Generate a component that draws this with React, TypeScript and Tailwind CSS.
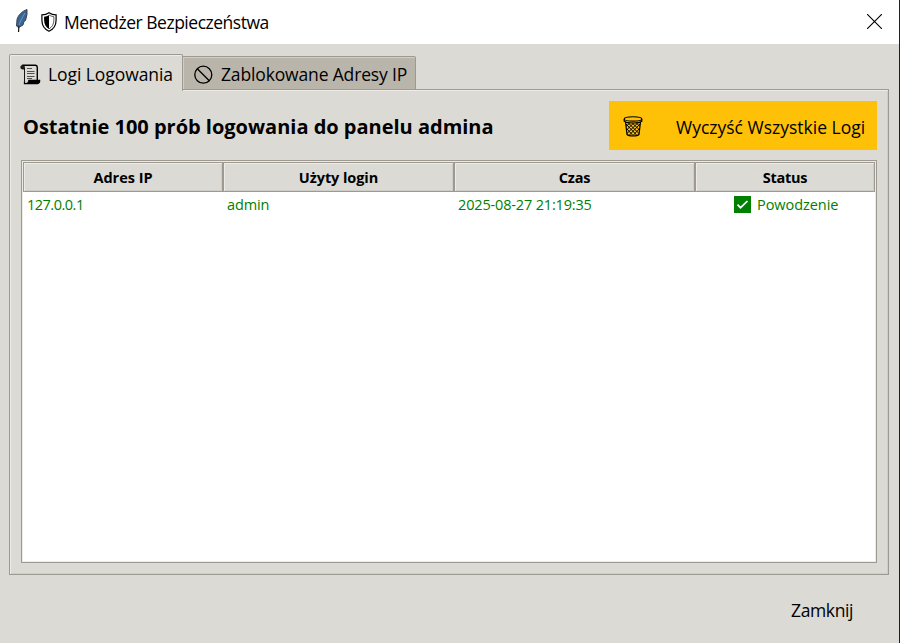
import React from "react";

function Feather() {
  return (
    <svg width="13" height="24" viewBox="0 0 13 24" fill="none">
      <path d="M12 .5C8 2 3.500 5.500 2 10.500L1.500 17l2 1.500 4.500-2.500 1-3.500 1.500-1L12 5.500z" fill="#3a6494" />
      <path d="M12 .5C7.500 2 3 6 2 10.500L1.500 17l2 1.500 4.500-2.500 1-3.500 1.500-1L12 5.500z" stroke="#2b3849" strokeWidth=".9" />
      <path d="M10 4C7 9 4.500 13 3.800 18" stroke="#7ba3c6" strokeWidth=".8" />
      <path d="M4 16.500L3.500 23" stroke="#111" strokeWidth="1.200" />
    </svg>
  );
}

function Shield() {
  return (
    <svg width="16" height="20" viewBox="0 0 16 20" fill="none">
      <path d="M8 .7C6 2.100 3.500 2.800.9 2.800V8c0 5.500 3 9.400 7.100 11.300C12.100 17.400 15.100 13.500 15.100 8V2.800C12.500 2.800 10 2.100 8 .7z" fill="#fff" stroke="#000" strokeWidth="1.200" />
      <path d="M8 3C6.500 4 4.900 4.500 3.100 4.700V8c0 4.200 1.900 7.200 4.900 8.900z" fill="#000" />
      <path d="M8 3c1.500 1 3.100 1.500 4.900 1.700V8c0 4.200-1.900 7.200-4.900 8.900" stroke="#333" strokeWidth=".8" />
    </svg>
  );
}

function Scroll() {
  return (
    <svg width="21" height="21" viewBox="0 0 21 21" fill="none" stroke="#000">
      <path d="M2.500 1.300H15.500Q17.300 1.500 17.300 3.500V17" strokeWidth="1.400" />
      <path d="M4.500 5v12.500" strokeWidth=".9" />
      <path d="M4.500 5H1.800C.3 4.200.5 1.500 2.500 1.200c1.800.2 2.300 2 2 3.800z" fill="#222" strokeWidth=".8" />
      <path d="M4.500 17.200v2.500h12.800c2-.2 2.500-2 2.300-3.200H8.500" strokeWidth="1.300" />
      <path d="M8.500 16.500c-.2 1.500-.9 2.500-2.500 3H17.500c1.500-.5 2-1.800 2-3z" fill="#000" strokeWidth=".6" />
      <path d="M7 4.500h5M7 7.500h7.500M7 9.500h7.500M7 12.500h7.500M7 14.500h5" strokeWidth=".9" stroke="#444" />
    </svg>
  );
}

function Prohibited() {
  return (
    <svg width="20" height="20" viewBox="0 0 20 20" fill="none" stroke="#000" strokeWidth="1.300">
      <circle cx="10.300" cy="9.700" r="8.500" />
      <path d="M4.300 3.700l12 12" />
    </svg>
  );
}

function Basket() {
  return (
    <svg width="20" height="21" viewBox="0 0 20 21" fill="none" stroke="#000">
      <ellipse cx="10" cy="2.900" rx="8.800" ry="2.200" strokeWidth="1.100" />
      <path d="M1.200 3v2.200c3 2.400 14.600 2.400 17.600 0V3M2.500 6l1.500 12.500c2 2 10 2 12 0L17.500 6" strokeWidth="1.200" />
      <path d="M3 8l11 11.500M5.500 7.200L16 17.500M9.500 7.200l7 6.800M13.500 7.200l3.500 3.300M3.500 12.500l6.500 7M17 8L6 19.500M14.500 7.200L4 17.500M10.500 7.200l-7 6.800M6.500 7.200L3 10.500M16.500 12.500L10 19.500" strokeWidth="1" />
    </svg>
  );
}

const columns = [
  { label: "Adres IP", width: "w-[200px]", spacing: "tracking-normal" },
  { label: "Użyty login", width: "w-[231px]", spacing: "tracking-[-0.08px]" },
  { label: "Czas", width: "w-[241px]", spacing: "tracking-[-0.25px]" },
  { label: "Status", width: "w-[180px]", spacing: "tracking-[-0.25px]" },
];

export default function App() {
  return (
    <div className="flex h-[643px] w-[900px] flex-col overflow-hidden whitespace-nowrap border-r border-[#202020] bg-[#dcdad5] font-['Open_Sans','Noto_Sans',sans-serif] text-black">
      <header className="flex h-11 shrink-0 items-center bg-white pl-[15px] pr-[17px]">
        <div className="flex w-[26px] -translate-y-px"><Feather /></div>
        <div className="flex w-[23px]"><Shield /></div>
        <h1 className="pb-px text-[17.5px] leading-6 tracking-[-0.48px]">Menedżer Bezpieczeństwa</h1>
        <button aria-label="Zamknij okno" className="ml-auto pb-px">
          <svg width="15" height="15" viewBox="0 0 15 15" stroke="#000" strokeWidth="1.100"><path d="M0 0l15 15M15 0L0 15" /></svg>
        </button>
      </header>

      <main className="flex w-[889px] flex-col pl-[9px] pt-[10px]">
        <nav className="z-10 -mb-[2px] flex h-[37px] items-start">
          <button className="flex h-[37px] w-[174px] items-center rounded-t-[2px] border border-b-0 border-[#9e9a91] bg-[#dcdad5] pl-[10px] pt-[3px] shadow-[inset_1px_1px_0_#eeebe7]">
            <span className="flex w-[28px]"><Scroll /></span>
            <span className="text-[17.5px] tracking-[-0.07px]">Logi Logowania</span>
          </button>
          <button className="mt-[2px] flex h-[34px] w-[233px] items-center rounded-tr-[2px] border border-l-0 border-[#9e9a91] bg-[#bab5ab] pl-[10px] pt-[3px] shadow-[inset_1px_1px_0_#cfcdc8]">
            <span className="flex w-[28px]"><Prohibited /></span>
            <span className="text-[17.5px] tracking-[-0.15px]">Zablokowane Adresy IP</span>
          </button>
        </nav>

        <section className="h-[486px] border border-[#9e9a91] px-[11px] pt-[11px] shadow-[inset_1px_1px_0_#eeebe7,inset_-1px_-1px_0_#cfcdc8]">
          <div className="flex h-[49px] items-center justify-between">
            <h2 className="pl-[2px] pt-[2px] text-[20px] font-bold leading-7 tracking-[-0.01px]">Ostatnie 100 prób logowania do panelu admina</h2>
            <button className="flex h-[49px] w-[268px] items-center bg-[#ffc107] pl-[14px]">
              <span className="flex w-[53px] pt-[2px]"><Basket /></span>
              <span className="pt-[3px] text-[17.5px] tracking-normal">Wyczyść Wszystkie Logi</span>
            </button>
          </div>

          <div className="mt-[10px] h-[403px] border border-[#9e9a91] bg-white p-px shadow-[inset_0_0_0_1px_#eeebe7]">
            <div className="flex h-[30px]">
              {columns.map((c) => (
                <div key={c.label} className={`${c.width} flex shrink-0 items-center justify-center border border-[#9e9a91] bg-[#dcdad5] pt-px text-[14.5px] font-bold shadow-[inset_1px_1px_0_#eeebe7,inset_-1px_-1px_0_#cfcdc8]`}>
                  <span className={c.spacing}>{c.label}</span>
                </div>
              ))}
            </div>
            <div className="flex h-[25px] items-center text-[14.5px] text-[#008000]">
              <span className="w-[200px] pl-1 pt-px tracking-[-0.5px]">127.0.0.1</span>
              <span className="w-[231px] pl-1 pt-px tracking-[-0.1px]">admin</span>
              <span className="w-[241px] pl-1 pt-px tracking-[-0.16px]">2025-08-27 21:19:35</span>
              <span className="flex w-[180px] items-center pl-[39px]">
                <svg width="17" height="17" viewBox="0 0 17 17"><path d="M0 0h17v17H0z" fill="#008000" /><path d="M3.500 8.700l3 3L13.500 5" fill="none" stroke="#fff" strokeWidth="1.700" /></svg>
                <span className="ml-[6px] pt-px tracking-[-0.05px]">Powodzenie</span>
              </span>
            </div>
          </div>
        </section>
      </main>

      <footer className="flex flex-1 items-center justify-end pr-[46px] pt-[3px]">
        <button className="text-[17.5px] tracking-[-0.4px]">Zamknij</button>
      </footer>
    </div>
  );
}
